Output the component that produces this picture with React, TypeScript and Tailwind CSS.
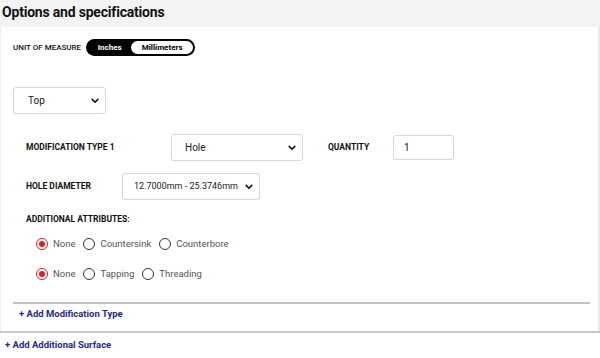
import React, { useState } from 'react';

const Chevron: React.FC = () => (
  <svg width="8" height="6" viewBox="0 0 10 7" className="shrink-0">
    <path d="M1.5 1.5 L5 5 L8.5 1.5" fill="none" stroke="#111" strokeWidth="2" strokeLinecap="round" />
  </svg>
);

interface FakeSelectProps {
  value: string;
  className: string;
}

const FakeSelect: React.FC<FakeSelectProps> = ({ value, className }) => (
  <div
    className={
      'flex items-center justify-between whitespace-nowrap rounded-[3px] border border-[#d6d6d6] bg-white text-[#222] ' +
      className
    }
  >
    <span>{value}</span>
    <Chevron />
  </div>
);

const Radio: React.FC<{ label: string; checked: boolean; onClick: () => void }> = ({
  label,
  checked,
  onClick,
}) => (
  <label onClick={onClick} className="flex cursor-pointer items-center gap-[5px]">
    <span
      className={
        'flex h-[12px] w-[12px] items-center justify-center rounded-full border-[1.5px] ' +
        (checked ? 'border-[#e0201f]' : 'border-[#333]')
      }
    >
      {checked && <span className="h-[6px] w-[6px] rounded-full bg-[#e0201f]"></span>}
    </span>
    <span className="text-[9.5px] text-[#555]">{label}</span>
  </label>
);

const App: React.FC = () => {
  const [metric, setMetric] = useState(false);
  const [attrA, setAttrA] = useState('None');
  const [attrB, setAttrB] = useState('None');

  return (
    <div className="h-[358px] w-[600px] overflow-hidden bg-white font-['Roboto',sans-serif] text-[#111]">
      <div className="h-[27px] bg-[#f3f3f3] pl-[2px] pt-[2px] text-[14px] font-bold tracking-[-0.2px]">
        Options and specifications
      </div>
      <div className="border-r-2 border-l border-r-[#e8e8e8] border-l-[#ececec] pr-[8px]">
        <div className="flex items-center pl-[12px] pt-[12px]">
          <span className="text-[8px] font-medium text-[#111]">UNIT OF MEASURE</span>
          <div className="ml-[5px] flex h-[17px] w-[109px] items-center rounded-full bg-black p-[2px] text-[8px] font-bold">
            <button
              onClick={() => setMetric(false)}
              className={
                'flex h-full w-[43px] items-center justify-center rounded-full ' +
                (metric ? 'bg-white text-black' : 'text-white')
              }
            >
              Inches
            </button>
            <button
              onClick={() => setMetric(true)}
              className={
                'flex h-full flex-1 items-center justify-center rounded-full ' +
                (metric ? 'text-white' : 'bg-white text-black')
              }
            >
              Millimeters
            </button>
          </div>
        </div>

        <div className="pl-[12px] pt-[31px]">
          <FakeSelect value="Top" className="h-[27px] w-[93px] pl-[14px] pr-[6px] text-[10px]" />
        </div>

        <div className="flex items-center pl-[25px] pt-[20px]">
          <span className="w-[145px] text-[8.5px] font-bold">MODIFICATION TYPE 1</span>
          <FakeSelect value="Hole" className="h-[27px] w-[132px] pl-[13px] pr-[6px] text-[10px]" />
          <span className="ml-[25px] w-[65px] text-[8.5px] font-bold">QUANTITY</span>
          <div className="flex h-[25px] w-[61px] items-center rounded-[3px] border border-[#d6d6d6] pl-[10px] text-[10px]">
            1
          </div>
        </div>

        <div className="flex items-center pl-[25px] pt-[12px]">
          <span className="w-[96px] text-[8.5px] font-bold">HOLE DIAMETER</span>
          <FakeSelect
            value="12.7000mm - 25.3746mm"
            className="h-[27px] w-[138px] pl-[11px] pr-[6px] text-[9px]"
          />
        </div>

        <div className="pl-[25px] pt-[13px] text-[8.5px] font-bold">ADDITIONAL ATTRIBUTES:</div>

        <div className="flex items-center gap-[8px] pl-[35px] pt-[11px]">
          {['None', 'Countersink', 'Counterbore'].map((l) => (
            <Radio key={l} label={l} checked={attrA === l} onClick={() => setAttrA(l)} />
          ))}
        </div>
        <div className="flex items-center gap-[8px] pl-[35px] pt-[16px]">
          {['None', 'Tapping', 'Threading'].map((l) => (
            <Radio key={l} label={l} checked={attrB === l} onClick={() => setAttrB(l)} />
          ))}
        </div>

        <div className="ml-[12px] mt-[21px] border-t-2 border-[#c4c4c4] pb-[11px] pl-[6px] pt-[4px] text-[9.5px] leading-[12px]">
          <a className="cursor-pointer font-bold text-[#1e2a8a]">+ Add Modification Type</a>
        </div>
      </div>
      <div className="border-t-2 border-[#c8c8c8] pl-[5px] pt-[6px] text-[9.5px] leading-[12px]">
        <a className="cursor-pointer font-bold text-[#1e2a8a]">+ Add Additional Surface</a>
      </div>
    </div>
  );
};

export default App;
